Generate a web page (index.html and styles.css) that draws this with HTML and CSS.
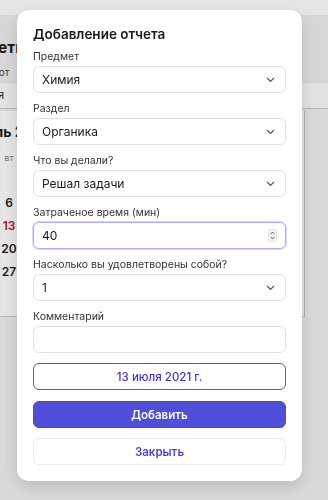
FILE: index.html
```html
<!DOCTYPE html>
<html lang="ru">
<head>
    <meta charset="UTF-8">
    <meta name="viewport" content="width=device-width, initial-scale=1.0">
    <title>Добавление отчета</title>
    <link rel="stylesheet" href="styles.css">
</head>
<body>

<div class="page">
    <div class="topbar"></div>

    <div class="summary">
        <h1 class="summary-title">Посмотреть отчеты</h1>
        <div class="summary-head">Всего работ</div>
    </div>
    <div class="summary-row">Химия</div>

    <div class="calendar">
        <div class="calendar-title">Июль 2021</div>
        <div class="calendar-grid">
            <div class="weekday">пн</div><div class="weekday">вт</div><div class="weekday">ср</div>
            <div class="day"></div><div class="day"></div><div class="day"></div>
            <div class="day">5</div><div class="day">6</div><div class="day">7</div>
            <div class="day">12</div><div class="day today">13</div><div class="day">14</div>
            <div class="day">19</div><div class="day">20</div><div class="day">21</div>
            <div class="day">26</div><div class="day">27</div><div class="day">28</div>
        </div>
    </div>
</div>

<div class="overlay">
    <div class="modal">
        <h2 class="modal-title">Добавление отчета</h2>

        <div class="field">
            <label>Предмет</label>
            <div class="control">Химия
                <svg class="chevron" width="9" height="6" viewBox="0 0 9 6"><path d="M1 1l3.5 3.5L8 1" fill="none" stroke="#555" stroke-width="1.2"/></svg>
            </div>
        </div>

        <div class="field">
            <label>Раздел</label>
            <div class="control">Органика
                <svg class="chevron" width="9" height="6" viewBox="0 0 9 6"><path d="M1 1l3.5 3.5L8 1" fill="none" stroke="#555" stroke-width="1.2"/></svg>
            </div>
        </div>

        <div class="field">
            <label>Что вы делали?</label>
            <div class="control">Решал задачи
                <svg class="chevron" width="9" height="6" viewBox="0 0 9 6"><path d="M1 1l3.5 3.5L8 1" fill="none" stroke="#555" stroke-width="1.2"/></svg>
            </div>
        </div>

        <div class="field">
            <label>Затраченое время (мин)</label>
            <div class="control control-focus">40
                <svg class="spinner" width="9" height="13" viewBox="0 0 9 13">
                    <rect x="0.5" y="0.5" width="8" height="12" rx="2" fill="#f4f4f4" stroke="#d4d4d4" stroke-width="0.6"/>
                    <path d="M2.6 5L4.5 3.1 6.4 5M2.6 8l1.9 1.9L6.4 8" fill="none" stroke="#555" stroke-width="1"/>
                </svg>
            </div>
        </div>

        <div class="field">
            <label>Насколько вы удовлетворены собой?</label>
            <div class="control">1
                <svg class="chevron" width="9" height="6" viewBox="0 0 9 6"><path d="M1 1l3.5 3.5L8 1" fill="none" stroke="#555" stroke-width="1.2"/></svg>
            </div>
        </div>

        <div class="field field-last">
            <label>Комментарий</label>
            <div class="control"></div>
        </div>

        <button class="btn btn-date">13 июля 2021 г.</button>
        <button class="btn btn-primary">Добавить</button>
        <button class="btn btn-close">Закрыть</button>
    </div>
</div>

</body>
</html>
```

FILE: styles.css
```css
body {
    font-family: 'Inter', 'Noto Sans', sans-serif;
    margin: 0;
    padding: 0;
    height: 500px;
    overflow: hidden;
    background-color: #f2f2f2;
    color: #1c1c1c;
}

/* page behind the dialog */

.page {
    margin-left: -80px;
}

.topbar {
    height: 15px;
    background: #fff;
}

.summary {
    height: 67px;
    box-sizing: border-box;
    padding-top: 23px;
    background: #f0f0f0;
}

.summary-title {
    margin: 0;
    padding-left: 8px;
    font-size: 15.5px;
    line-height: 20px;
    font-weight: 700;
}

.summary-head {
    margin-top: 8px;
    padding-left: 30px;
    font-size: 10px;
    line-height: 12px;
    color: #444;
}

.summary-row {
    height: 25px;
    padding-left: 49px;
    background: #fcfcfc;
    border-top: 1px solid #e4e4e4;
    border-bottom: 1px solid #cdcdcd;
    font-size: 11px;
    line-height: 25px;
}

.calendar {
    width: 384px;
    height: 193px;
    margin-top: 2px;
    padding-top: 12px;
    background: #fff;
    border-right: 1px solid #c4c4c4;
    border-bottom: 1px solid #cfcfcf;
}

.calendar-title {
    padding-left: 52px;
    font-size: 14px;
    line-height: 18px;
    font-weight: 700;
}

.calendar-grid {
    display: grid;
    grid-template-columns: repeat(3, 34px);
    grid-template-rows: 20px;
    grid-auto-rows: 23px;
    margin-top: 7px;
    padding-left: 38px;
}

.weekday {
    font-size: 9px;
    line-height: 20px;
    text-align: center;
    color: #888;
}

.day {
    font-size: 12px;
    line-height: 23px;
    font-weight: 600;
    text-align: center;
}

.day.today {
    color: #c8141e;
}

/* dialog */

.overlay {
    position: fixed;
    inset: 0;
    display: flex;
    align-items: flex-start;
    padding: 10px 0 0 17px;
    background: rgba(0, 0, 0, 0.1);
}

.modal {
    width: 285px;
    box-sizing: border-box;
    padding: 14px 16px 16px;
    background: #fff;
    border-radius: 12px;
    box-shadow: 0 6px 16px rgba(0, 0, 0, 0.14);
}

.modal-title {
    margin: 0 0 6px;
    font-size: 13.5px;
    line-height: 20px;
    font-weight: 600;
    color: #1a1a1a;
}

.field {
    margin-bottom: 9px;
}

.field label {
    display: block;
    margin-bottom: 2px;
    font-size: 10.5px;
    line-height: 14px;
    color: #333;
}

.field-last {
    margin-bottom: 10px;
}

.control {
    display: flex;
    align-items: center;
    justify-content: space-between;
    height: 27px;
    box-sizing: border-box;
    padding: 0 8px;
    border: 1px solid #e2e2e2;
    border-radius: 6px;
    font-size: 12px;
    color: #1a1a1a;
}

.chevron {
    margin-right: 2px;
}

.control-focus {
    border-color: #aeb0f6;
    box-shadow: 0 0 0 1px #d6d7fb;
}

.btn {
    display: block;
    width: 100%;
    height: 27px;
    box-sizing: border-box;
    border-radius: 6px;
    font-family: inherit;
    font-size: 11.5px;
    cursor: pointer;
}

.btn-date {
    margin-bottom: 11px;
    background: #fff;
    border: 1.5px solid #5653e0;
    color: #3c37c6;
    font-weight: 500;
}

.btn-primary {
    margin-bottom: 10px;
    background: #4f4edb;
    border: 1px solid #4a48d6;
    color: #fff;
    font-weight: 600;
}

.btn-close {
    background: #fff;
    border: 1px solid #ebebeb;
    color: #4b48d6;
    font-weight: 600;
}
```
